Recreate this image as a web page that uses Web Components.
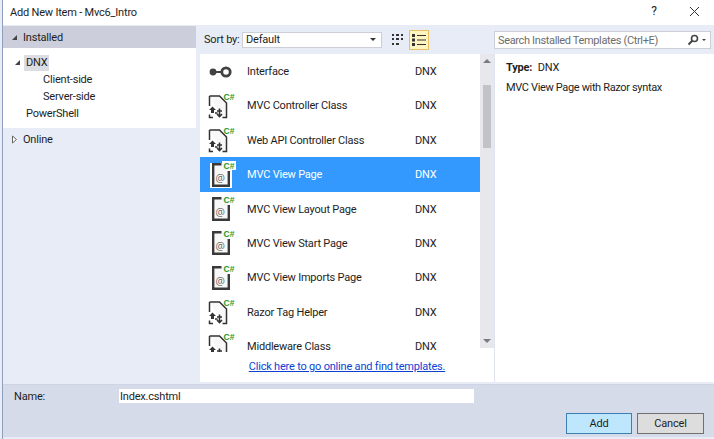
<!DOCTYPE html>
<html>
<head>
<meta charset="utf-8">
<title>Add New Item</title>
<style>
    html, body { margin: 0; padding: 0; height: 100%; overflow: hidden; }
    body { font: 11px Roboto, sans-serif; letter-spacing: -0.2px; color: #1e1e1e; background: #fff; }
</style>
</head>
<body>
<add-item-dialog></add-item-dialog>

<script>
const CSHARP = `<text x="15.500" y="6.500" font-family="'Liberation Sans',sans-serif" font-size="8.500" font-weight="700" letter-spacing="0" fill="#1f9a2a">C#</text>`;

const ICONS = {
    iface: `<svg width="28" height="14" viewBox="0 0 28 14"><circle cx="5" cy="7" r="3.400" fill="#424242"/><rect x="5" y="6" width="9" height="2" fill="#424242"/><circle cx="18" cy="7" r="4.200" fill="none" stroke="#424242" stroke-width="2.800"/></svg>`,
    code: `<svg width="28" height="26" viewBox="0 0 28 26">
        <path d="M1.500 3H11.500L18.500 10V24.500H14.500M1.500 3V13M1.500 21.500V24.500H5" fill="#f8f8f8" stroke="#333" stroke-width="1.500"/>
        <path d="M1 17L4.500 13.500L8 17L6 17V20H3V17Z" fill="#333"/>
        <path d="M7 20H9.500M11.500 15.500V23.500M9 21L11.500 23.500L14 21M9 18H14" fill="none" stroke="#333" stroke-width="1.600"/>
        ${CSHARP}</svg>`,
    view: `<svg width="28" height="26" viewBox="0 0 28 26">
        <path class="halo" d="M2 1H14V-1H28V8H24V26H2Z" fill="#fff"/>
        <rect x="5" y="2" width="15" height="21" fill="#f8f8f8"/>
        <path d="M13.500 2.200H5.200V23.800H20.800V9" fill="none" stroke="#3a3a3a" stroke-width="2.400"/>
        <text x="7.500" y="19.500" font-family="'Open Sans',sans-serif" font-size="10.500" letter-spacing="0" fill="#666">@</text>
        ${CSHARP}</svg>`
};

class TreeRow extends HTMLElement {
    constructor() {
        super();
        this.attachShadow({ mode: 'open' });
        const indent = this.getAttribute("indent") || 0;
        const arrow = this.getAttribute("arrow");
        let glyph = "";
        if (arrow == "open") glyph = `<svg width="7" height="7" viewBox="0 0 7 7"><path d="M6 1V6H1Z" fill="#444"/></svg>`;
        if (arrow == "closed") glyph = `<svg width="7" height="9" viewBox="0 0 7 9"><path d="M1.500 1L5.500 4.500L1.500 8Z" fill="#fff" stroke="#666"/></svg>`;
        this.shadowRoot.innerHTML = `
            <style>
                :host { display: flex; align-items: center; height: 17px; padding-left: ${indent}px; }
                .arrow { width: 14px; display: flex; align-items: center; justify-content: center; }
                .label { padding: 0 2px; line-height: 16px; }
                :host([current]) .label { background: #dcdce3; }
            </style>
            <span class="arrow">${glyph}</span>
            <span class="label"><slot></slot></span>
        `;
    }
}

class SidePanel extends HTMLElement {
    constructor() {
        super();
        this.attachShadow({ mode: 'open' });
        this.shadowRoot.innerHTML = `
            <style>
                :host { display: block; width: 193px; flex: none; }
                .head { height: 22px; box-sizing: border-box; padding: 1px 0 0 4px; display: flex; align-items: center; }
                .head.on { background: #cccedb; margin-top: 1px; }
                .tree { background: #fff; height: 80px; padding-top: 6px; box-sizing: border-box; }
            </style>
            <div class="head on"><tree-row arrow="open">Installed</tree-row></div>
            <div class="tree">
                <tree-row arrow="open" indent="7" current>DNX</tree-row>
                <tree-row indent="24">Client-side</tree-row>
                <tree-row indent="24">Server-side</tree-row>
                <tree-row indent="7">PowerShell</tree-row>
            </div>
            <div class="head"><tree-row arrow="closed">Online</tree-row></div>
        `;
    }
}

class SortBar extends HTMLElement {
    constructor() {
        super();
        this.attachShadow({ mode: 'open' });
        this.shadowRoot.innerHTML = `
            <style>
                :host { display: flex; align-items: center; height: 29px; padding-left: 4px; box-sizing: border-box; }
                .sort { width: 38px; white-space: nowrap; flex: none; }
                .select { width: 140px; height: 16px; box-sizing: border-box; border: 1px solid #ccced8; background: #fff;
                    display: flex; align-items: center; justify-content: space-between; padding: 0 5px 0 3px; line-height: 14px; }
                .select i { border: 3px solid transparent; border-top-color: #333; border-bottom: 0; }
                .view { height: 20px; box-sizing: border-box; display: flex; align-items: center; justify-content: center; }
                .first { margin-left: 10px; width: 11px; }
                .view.on { width: 20px; background: #fdf4bf; border: 1px solid #e5c365; margin-left: 6px; }
            </style>
            <span class="sort">Sort by:</span>
            <div class="select">Default<i></i></div>
            <div class="view first"><svg width="11" height="11" viewBox="0 0 11 11" fill="#333"><path d="M0 0h2v2H0zM4 0h3v2H4zM9 0h2v2H9zM0 4h2v2H0zM4 4h3v2H4zM9 4h2v2H9zM0 9h2v2H0zM4 9h3v2H4z"/></svg></div>
            <div class="view on"><svg width="14" height="12" viewBox="0 0 14 12" fill="#333"><path d="M0 0h3v3H0zM5 1h9v1H5zM0 4.500h3v3H0zM5 5.500h9v1H5zM0 9h3v3H0zM5 10h9v1H5z"/></svg></div>
        `;
    }
}

class TemplateRow extends HTMLElement {
    constructor() {
        super();
        this.attachShadow({ mode: 'open' });
        const icon = ICONS[this.getAttribute("icon")];
        this.shadowRoot.innerHTML = `
            <style>
                :host { display: flex; align-items: center; height: 34.360px; padding-top: 0.640px; box-sizing: border-box; flex: none; }
                :host([selected]) { background: #3399ff; color: #fff; }
                .icon { width: 28px; height: 26px; margin-left: 8px; flex: none; display: flex; align-items: center; }
                .icon svg { display: block; overflow: visible; }
                .halo { display: none; }
                :host([selected]) .halo { display: inline; }
                .name { margin-left: 11px; width: 168px; }
            </style>
            <span class="icon">${icon}</span>
            <span class="name"><slot></slot></span>
            <span>DNX</span>
        `;
    }
}

class TemplateList extends HTMLElement {
    constructor() {
        super();
        this.attachShadow({ mode: 'open' });
        this.shadowRoot.innerHTML = `
            <style>
                :host { display: flex; flex-direction: column; flex: none; width: 294px; height: 328px; background: #fff; border-right: 1px solid #dfe3f0; }
                .view { display: flex; height: 298px; flex: none; }
                .rows { flex: 1; overflow: hidden; display: flex; flex-direction: column; padding-top: 0.100px; }
                .bar { width: 14px; background: #e8e8ec; display: flex; flex-direction: column; align-items: center; height: 294px; }
                .bar i { width: 0; height: 0; border: 4px solid transparent; margin: 5px 0; }
                .up { border-bottom-color: #7a7a86 !important; border-top: 0 !important; }
                .down { border-top-color: #7a7a86 !important; border-bottom: 0 !important; margin-top: auto !important; }
                .thumb { width: 8px; height: 63px; background: #c2c3c9; margin-top: 17px; }
                .link { height: 28px; display: flex; align-items: center; justify-content: center; color: #0e3fd4; text-decoration: underline; }
            </style>
            <div class="view">
                <div class="rows">
                    <template-row icon="iface">Interface</template-row>
                    <template-row icon="code">MVC Controller Class</template-row>
                    <template-row icon="code">Web API Controller Class</template-row>
                    <template-row icon="view" selected>MVC View Page</template-row>
                    <template-row icon="view">MVC View Layout Page</template-row>
                    <template-row icon="view">MVC View Start Page</template-row>
                    <template-row icon="view">MVC View Imports Page</template-row>
                    <template-row icon="code">Razor Tag Helper</template-row>
                    <template-row icon="code">Middleware Class</template-row>
                </div>
                <div class="bar"><i class="up"></i><div class="thumb"></div><i class="down"></i></div>
            </div>
            <div class="link">Click here to go online and find templates.</div>
        `;
    }
}

class DetailPane extends HTMLElement {
    constructor() {
        super();
        this.attachShadow({ mode: 'open' });
        this.shadowRoot.innerHTML = `
            <style>
                :host { display: block; flex: 1; background: #fff; height: 328px; padding: 5px 11px; box-sizing: border-box; }
                .type { height: 18px; line-height: 18px; }
                .type b { font-weight: 700; margin-right: 3px; }
                p { margin: 2px 0 0; line-height: 18px; letter-spacing: -0.350px; }
            </style>
            <div class="type"><b>Type:</b> DNX</div>
            <p><slot></slot></p>
        `;
    }
}

class SearchBox extends HTMLElement {
    constructor() {
        super();
        this.attachShadow({ mode: 'open' });
        this.shadowRoot.innerHTML = `
            <style>
                :host { display: flex; align-items: center; justify-content: space-between; width: 217px; height: 18px; box-sizing: border-box; margin: 6px 0 0 0;
                    border: 1px solid #ccced8; background: #fff; color: #6d6d6d; padding: 0 4px 0 3px; letter-spacing: -0.350px; }
                .tools { display: flex; align-items: center; gap: 3px; }
                i { border: 2.500px solid transparent; border-top-color: #444; border-bottom: 0; }
            </style>
            <span>Search Installed Templates (Ctrl+E)</span>
            <span class="tools">
                <svg width="12" height="12" viewBox="0 0 12 12"><circle cx="7.500" cy="4.500" r="3" fill="none" stroke="#444" stroke-width="1.600"/><path d="M5.500 6.500L1.500 10.500" stroke="#444" stroke-width="2"/></svg>
                <i></i>
            </span>
        `;
    }
}

class AddItemDialog extends HTMLElement {
    constructor() {
        super();
        this.attachShadow({ mode: 'open' });
        this.shadowRoot.innerHTML = `
            <style>
                :host { display: flex; flex-direction: column; width: 714px; height: 439px; box-sizing: border-box; padding-left: 3px;
                    background: linear-gradient(to right, #e8ecf6 2px, #8f9fc0 2px, #8f9fc0 3px, #e8ecf6 3px); }
                .title { height: 25px; flex: none; background: #fff; display: flex; align-items: center; padding-left: 7px; }
                .title span:first-child { flex: 1; }
                .help { width: 20px; text-align: center; margin: 0 25px 3px 0; font-size: 12px; }
                .close { margin: 0 14px 3px 0; display: flex; }
                .main { display: flex; flex: none; height: 359px; }
                .side { flex: none; }
                .col { flex: 1; display: flex; flex-direction: column; margin-left: 4px; }
                .top { display: flex; height: 29px; flex: none; }
                .top sort-bar { width: 294px; flex: none; }
                .panes { display: flex; }
                .foot { flex: 1; background: #d6dbe9; border-top: 1px solid #cfd5e6; border-bottom: 2px solid #e8ecf6; padding: 4px 0 0 11px; }
                .name { display: flex; align-items: center; height: 14px; }
                .name label { width: 105px; }
                .name input { all: unset; width: 355px; height: 14px; line-height: 14px; background: #fff; font: inherit; padding-left: 1px; box-sizing: border-box; }
                .buttons { display: flex; justify-content: flex-end; gap: 5px; margin: 10px 10px 0 0; }
                .btn { width: 66px; height: 21px; box-sizing: border-box; display: flex; align-items: center; justify-content: center; border: 1px solid #707070; background: #dddddd; }
                .btn + .btn { width: 67px; }
                .btn.primary { background: #bee6fd; border-color: #3c7fb1; }
            </style>
            <div class="title"><span>Add New Item - Mvc6_Intro</span>
                <span class="help">?</span>
                <span class="close"><svg width="11" height="11" viewBox="0 0 11 11"><path d="M1 1L10 10M10 1L1 10" stroke="#333" stroke-width="1"/></svg></span>
            </div>
            <div class="main">
                <side-panel class="side"></side-panel>
                <div class="col">
                    <div class="top"><sort-bar></sort-bar><search-box></search-box></div>
                    <div class="panes">
                        <template-list></template-list>
                        <detail-pane>MVC View Page with Razor syntax</detail-pane>
                    </div>
                </div>
            </div>
            <div class="foot">
                <div class="name"><label>Name:</label><input value="Index.cshtml"></div>
                <div class="buttons"><div class="btn primary">Add</div><div class="btn">Cancel</div></div>
            </div>
        `;
    }
}

window.customElements.define("tree-row", TreeRow);
window.customElements.define("side-panel", SidePanel);
window.customElements.define("sort-bar", SortBar);
window.customElements.define("template-row", TemplateRow);
window.customElements.define("template-list", TemplateList);
window.customElements.define("detail-pane", DetailPane);
window.customElements.define("search-box", SearchBox);
window.customElements.define("add-item-dialog", AddItemDialog);
</script>
</body>
</html>
